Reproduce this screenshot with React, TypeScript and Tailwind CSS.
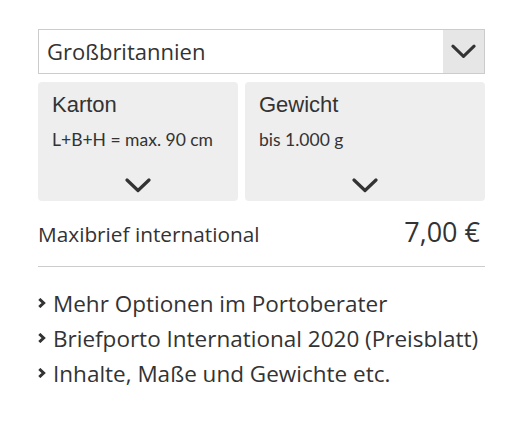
import React from "react";

const Chevron = ({ className }: { className?: string }) => (
  <svg viewBox="0 0 26 15" className={className} fill="none" stroke="currentColor" strokeWidth="3.2" strokeLinecap="round" strokeLinejoin="round">
    <path d="M2 2 L13 12.5 L24 2" />
  </svg>
);

const Bullet = () => (
  <svg viewBox="0 0 8 10" className="w-[8px] h-[10px] shrink-0 mt-[11.5px] text-[#333]" fill="none" stroke="currentColor" strokeWidth="3" strokeLinejoin="miter">
    <path d="M1.3 1 L5.6 5 L1.3 9" />
  </svg>
);

export default function App() {
  const sans = { fontFamily: '"Open Sans", "Noto Sans", sans-serif' };
  const arial = { fontFamily: '"Liberation Sans", Arial, sans-serif' };
  const lato = { fontFamily: 'Lato, sans-serif' };
  return (
    <div className="w-[527px] h-[435px] bg-white text-[#333]" style={sans}>
      <div className="pt-[29px] pl-[38px] w-[485px]">
        <div className="flex h-[45px] border border-[#cccccc] bg-white">
          <div className="flex-1 flex items-center pl-[8px] text-[22px] text-[#333]">Großbritannien</div>
          <div className="w-[41px] bg-[#e6e6e6] flex items-center justify-center">
            <Chevron className="w-[25px] h-[15px] text-[#333]" />
          </div>
        </div>
        <div className="mt-[8px] flex gap-[7px]">
          <div className="w-[200px] h-[119px] bg-[#eeeeee] rounded-[4px] flex flex-col pl-[14px] pt-[10px]">
            <div className="text-[22px] leading-[26px] text-[#333]" style={arial}>Karton</div>
            <div className="mt-[12px] text-[17.5px] leading-[20px] text-[#333]" style={lato}>L+B+H = max. 90 cm</div>
            <div className="mt-auto mb-[8px] flex justify-center pr-[14px]">
              <Chevron className="w-[26px] h-[15px] text-[#333]" />
            </div>
          </div>
          <div className="flex-1 h-[119px] bg-[#eeeeee] rounded-[4px] flex flex-col pl-[14px] pt-[10px]">
            <div className="text-[22px] leading-[26px] text-[#333]" style={arial}>Gewicht</div>
            <div className="mt-[12px] text-[17.5px] leading-[20px] text-[#333]" style={lato}>bis 1.000 g</div>
            <div className="mt-auto mb-[8px] flex justify-center pr-[14px]">
              <Chevron className="w-[26px] h-[15px] text-[#333]" />
            </div>
          </div>
        </div>
        <div className="mt-[15px] flex items-baseline justify-between pr-[5px]">
          <div className="text-[20.8px] leading-[26px]">Maxibrief international</div>
          <div className="text-[27px] leading-[32px]">7,00 €</div>
        </div>
        <div className="mt-[18px] h-px bg-[#cccccc]" />
        <div className="mt-[19px] flex flex-col">
          {[
            "Mehr Optionen im Portoberater",
            "Briefporto International 2020 (Preisblatt)",
            "Inhalte, Maße und Gewichte etc.",
          ].map((t) => (
            <div key={t} className="flex items-start gap-[7px] h-[35px] leading-[35px] text-[22.5px] whitespace-nowrap">
              <Bullet />
              <span>{t}</span>
            </div>
          ))}
        </div>
      </div>
    </div>
  );
}
